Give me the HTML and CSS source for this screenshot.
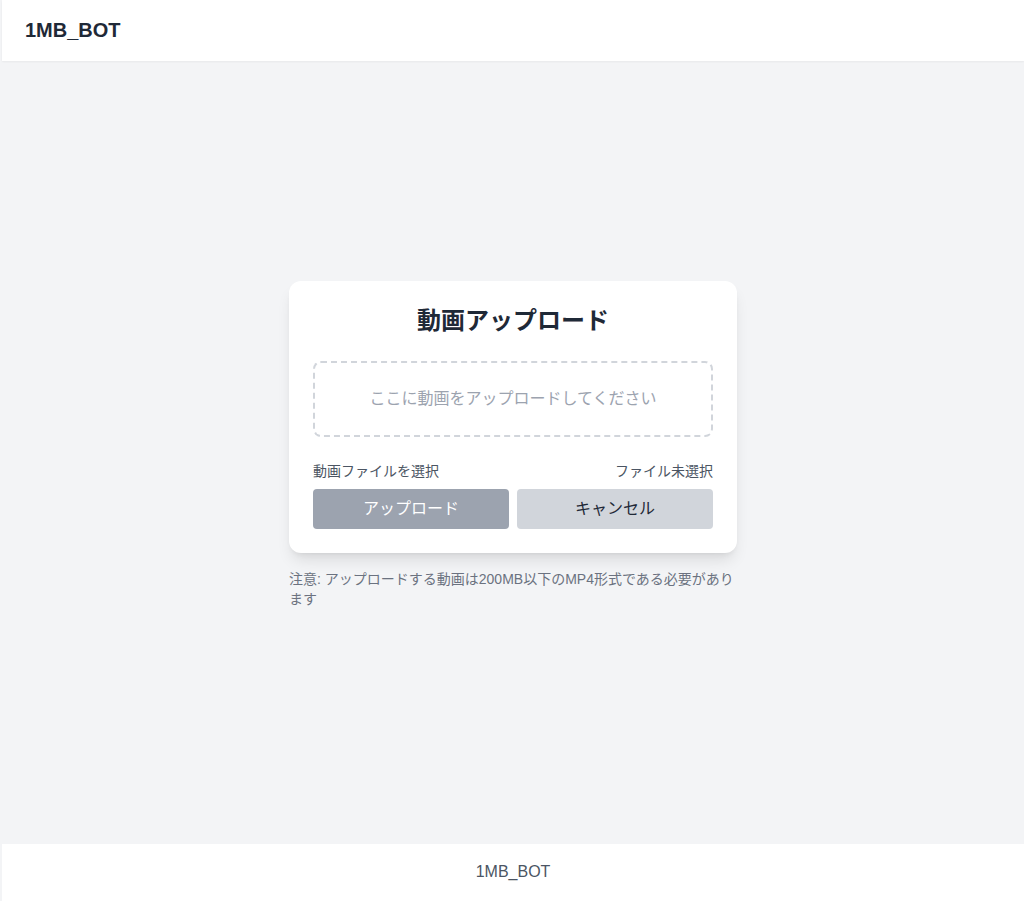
FILE: index.html
```html
<!DOCTYPE html>
<html lang="ja">
<head>
<meta charset="utf-8">
<title>1MB_BOT</title>
<link rel="stylesheet" href="styles.css">
</head>
<body>
<header class="site-header">
  <div class="brand">1MB_BOT</div>
</header>
<main class="main">
  <div class="wrap">
    <div class="card">
      <h1 class="title">動画アップロード</h1>
      <div class="dropzone">ここに動画をアップロードしてください</div>
      <div class="file-row">
        <span>動画ファイルを選択</span>
        <span>ファイル未選択</span>
      </div>
      <div class="btn-row">
        <button class="btn btn-upload">アップロード</button>
        <button class="btn btn-cancel">キャンセル</button>
      </div>
    </div>
    <p class="note">注意: アップロードする動画は200MB以下のMP4形式である必要があります</p>
  </div>
</main>
<footer class="site-footer">1MB_BOT</footer>
</body>
</html>
```
FILE: styles.css
```css
* { box-sizing: border-box; }
html, body { margin: 0; padding: 0; }
body {
  font-family: "Liberation Sans", Arial, "Noto Sans CJK JP", sans-serif;
  background: #f3f4f6;
  color: #1f2937;
  min-height: 100vh;
  display: flex;
  flex-direction: column;
  padding-left: 2px;
}
.site-header {
  background: #fff;
  height: 61px;
  padding: 16px 23px;
  box-shadow: 0 1px 2px rgba(0,0,0,0.05);
}
.brand {
  font-size: 20px;
  line-height: 28px;
  font-weight: 700;
  color: #1f2937;
}
.main {
  flex: 1;
  display: flex;
  align-items: center;
  justify-content: center;
  padding-bottom: 16px;
}
.wrap { width: 448px; }
.card {
  background: #fff;
  border-radius: 12px;
  padding: 24px;
  box-shadow: 0 10px 15px -3px rgba(0,0,0,0.1), 0 4px 6px -4px rgba(0,0,0,0.1);
}
.title {
  margin: 0 0 24px;
  text-align: center;
  font-size: 24px;
  line-height: 32px;
  font-weight: 700;
  color: #1f2937;
}
.dropzone {
  border: 2px dashed #d1d5db;
  border-radius: 8px;
  padding: 24px 16px;
  text-align: center;
  font-size: 16px;
  line-height: 24px;
  color: #9ca3af;
}
.file-row {
  margin-top: 24px;
  display: flex;
  justify-content: space-between;
  font-size: 14px;
  line-height: 20px;
  color: #4b5563;
}
.btn-row {
  margin-top: 8px;
  display: flex;
  gap: 8px;
}
.btn {
  flex: 1;
  height: 40px;
  border: 0;
  border-radius: 4px;
  font-family: inherit;
  font-size: 16px;
  line-height: 24px;
  padding: 8px 16px;
}
.btn-upload { background: #9ca3af; color: #fff; }
.btn-cancel { background: #d1d5db; color: #1f2937; }
.note {
  margin: 16px 0 0;
  font-size: 14px;
  line-height: 20px;
  color: #6b7280;
}
.site-footer {
  background: #fff;
  height: 57px;
  padding: 16px;
  text-align: center;
  font-size: 16px;
  line-height: 24px;
  color: #4b5563;
}
```
